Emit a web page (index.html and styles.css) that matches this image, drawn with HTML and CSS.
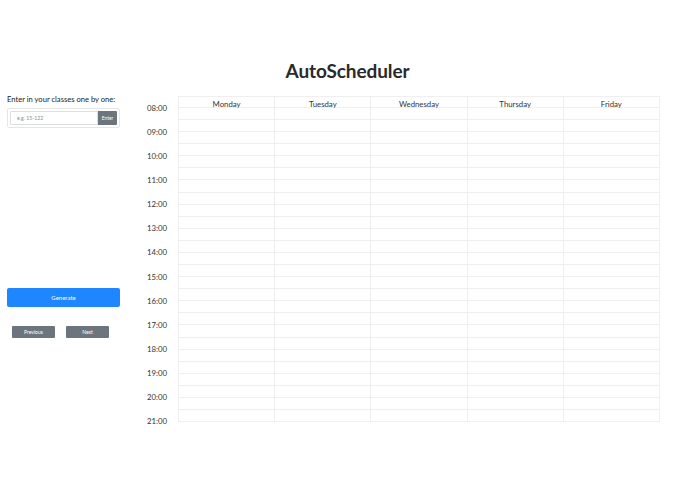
FILE: index.html
```html
<!DOCTYPE html>
<html>
<head>
<meta charset="utf-8">
<title>AutoScheduler</title>
<link rel="stylesheet" href="styles.css">
</head>
<body>
<h1 class="title">AutoScheduler</h1>
<div class="main">
  <div class="side">
    <div class="prompt">Enter in your classes one by one:</div>
    <div class="card">
      <div class="input-group">
        <input class="field" type="text" placeholder="e.g. 15-122">
        <button class="enter">Enter</button>
      </div>
    </div>
    <button class="generate">Generate</button>
    <div class="pager">
      <button class="page-btn">Previous</button>
      <button class="page-btn">Next</button>
    </div>
  </div>
  <div class="schedule">
    <div class="times">
      <div class="time">08:00</div>
      <div class="time">09:00</div>
      <div class="time">10:00</div>
      <div class="time">11:00</div>
      <div class="time">12:00</div>
      <div class="time">13:00</div>
      <div class="time">14:00</div>
      <div class="time">15:00</div>
      <div class="time">16:00</div>
      <div class="time">17:00</div>
      <div class="time">18:00</div>
      <div class="time">19:00</div>
      <div class="time">20:00</div>
      <div class="time">21:00</div>
    </div>
    <div class="days">
      <div class="day"><div class="day-head">Monday</div><div class="day-body"></div></div>
      <div class="day"><div class="day-head">Tuesday</div><div class="day-body"></div></div>
      <div class="day"><div class="day-head">Wednesday</div><div class="day-body"></div></div>
      <div class="day"><div class="day-head">Thursday</div><div class="day-body"></div></div>
      <div class="day"><div class="day-head">Friday</div><div class="day-body"></div></div>
    </div>
  </div>
</div>
</body>
</html>
```
FILE: styles.css
```css
* { box-sizing: border-box; }
body {
  margin: 0;
  font-family: Lato, "Noto Sans", sans-serif;
  color: #212529;
  background: #fff;
}
.title {
  margin: 58px 0 0;
  height: 26px;
  line-height: 26px;
  font-size: 19px;
  font-weight: 700;
  letter-spacing: -0.1px;
  text-align: center;
  color: #2a2a2a;
}
.main {
  display: flex;
  align-items: flex-start;
  margin-top: 12px;
}
.side {
  width: 113px;
  margin-left: 7px;
  margin-top: -3px;
  display: flex;
  flex-direction: column;
}
.prompt {
  font-size: 7.6px;
  line-height: 12px;
  color: #222;
  white-space: nowrap;
}
.card {
  margin-top: 3px;
  border: 1px solid #e6e6e6;
  border-radius: 2px;
  padding: 2px;
  height: 20px;
}
.input-group {
  display: flex;
  height: 14px;
}
.field {
  flex: 1;
  min-width: 0;
  border: 1px solid #dedede;
  border-radius: 1px 0 0 1px;
  padding: 0 0 0 6px;
  font-family: inherit;
  font-size: 5.2px;
  color: #555;
  outline: none;
}
.field::placeholder { color: #8a8a8a; }
.enter {
  width: 19px;
  border: none;
  background: #6c757d;
  color: #fff;
  font-family: inherit;
  font-size: 4.8px;
  padding: 0;
  border-radius: 0 1px 1px 0;
}
.generate {
  margin-top: 160px;
  height: 19px;
  border: none;
  border-radius: 2px;
  background: #1e86fe;
  color: #fff;
  font-family: inherit;
  font-size: 6px;
  padding: 0;
}
.pager {
  display: flex;
  gap: 11px;
  margin-top: 19px;
  padding-left: 5px;
}
.page-btn {
  width: 43px;
  height: 12px;
  border: none;
  border-radius: 1px;
  background: #6c757d;
  color: #fff;
  font-family: inherit;
  font-size: 5px;
  padding: 0;
}
.schedule {
  display: flex;
  align-items: flex-start;
  margin-left: 20px;
}
.times {
  width: 38px;
  display: flex;
  flex-direction: column;
}
.time {
  height: 24.08px;
  line-height: 24px;
  font-size: 7.8px;
  text-align: right;
  padding-right: 11px;
  color: #333;
}
.days {
  display: flex;
  border-right: 1px solid #efefef;
}
.day {
  width: 96.2px;
  border-left: 1px solid #efefef;
}
.day-head {
  height: 12px;
  line-height: 12px;
  font-size: 7.8px;
  text-align: center;
  color: #333;
  border-top: 1px solid #efefef;
  border-bottom: 1px solid #efefef;
  padding-top: 1px;
}
.day-body {
  height: 314px;
  background: repeating-linear-gradient(to bottom, transparent 0, transparent 11.08px, #efefef 11.08px, #efefef 12.08px);
}
```
